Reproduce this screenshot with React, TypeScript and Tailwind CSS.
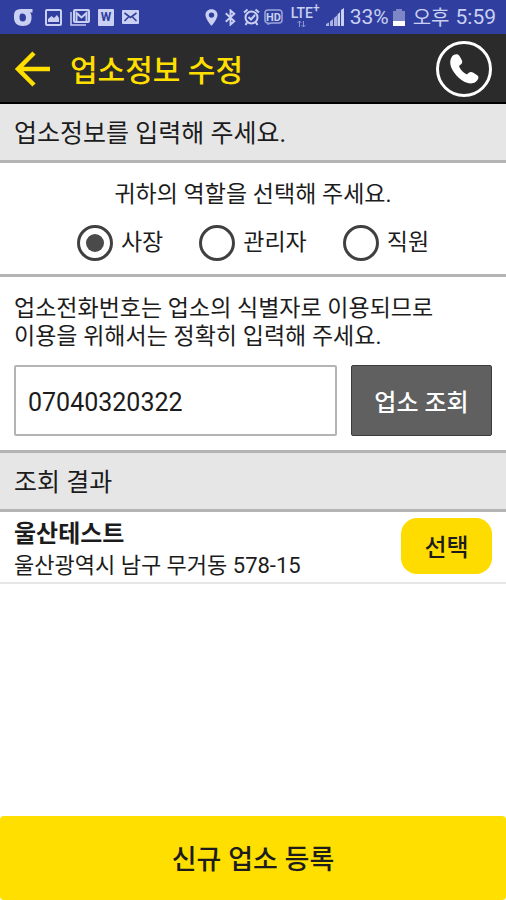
import { useState } from 'react';

const roles = [
  { id: 'owner', label: '사장' },
  { id: 'manager', label: '관리자' },
  { id: 'staff', label: '직원' },
];

const results = [{ name: '울산테스트', address: '울산광역시 남구 무거동 578-15' }];

function StatusBar() {
  return (
    <div className="flex h-[34px] items-center justify-between bg-[#303f9f] pr-2.5 pl-3.5 text-[#c9d0f2]">
      <div className="flex items-center gap-2">
        <svg width="19" height="17" viewBox="0 0 19 17" fill="currentColor" className="mr-1">
          <path
            fillRule="evenodd"
            d="M7 0H18.500V3.500H16C17.500 5 17.500 7 17.500 9C17.500 14 14.500 17 9 17S0 14 0 9V6Q0 0 7 0ZM8 4.500C6 4.500 5.500 6 5.500 8.500S6.500 12.500 8.800 12.500S12 11 12 8.500S10.500 4.500 8 4.500Z"
          />
        </svg>
        <svg width="17" height="17" viewBox="0 0 17 17">
          <rect x="1" y="1" width="15" height="15" rx="1" fill="none" stroke="currentColor" strokeWidth="2" />
          <path d="M3 13V10L6.500 7L9 9L12 6L14 9V13Z" fill="currentColor" />
        </svg>
        <svg width="20" height="17" viewBox="0 0 20 17" fill="none" stroke="currentColor">
          <path d="M1 3V16H16" strokeWidth="1.500" />
          <rect x="4" y="1" width="15" height="12" rx="1" strokeWidth="2" />
          <path d="M6.500 12V4L11.500 8.500L16.500 4V12" strokeWidth="2" />
        </svg>
        <span className="flex h-[17px] w-4 items-center justify-center rounded-[1px] bg-[#c9d0f2] text-[12px] leading-none font-bold text-[#303f9f]">
          W
        </span>
        <svg width="17" height="14" viewBox="0 0 17 14">
          <rect width="17" height="14" rx="1" fill="currentColor" />
          <path d="M2.500 3L8.500 7.500L14.500 3M2.500 11L6.500 7M14.500 11L10.500 7" fill="none" stroke="#303f9f" strokeWidth="1.600" />
        </svg>
      </div>

      <div className="flex items-center gap-1">
        <svg width="13" height="17" viewBox="0 0 14 18" className="mr-0.5">
          <path
            fillRule="evenodd"
            fill="currentColor"
            d="M7 0C3 0 .500 2.800 .500 6.300C.500 10.500 7 18 7 18S13.500 10.500 13.500 6.300C13.500 2.800 11 0 7 0ZM7 3.500A2.900 2.900 0 1 1 7 9.300A2.900 2.900 0 0 1 7 3.500Z"
          />
        </svg>
        <svg width="13" height="17" viewBox="0 0 13 18" fill="none" stroke="currentColor" strokeWidth="2" className="mr-0.5">
          <path d="M1.500 4.500L10.500 13L6.500 16.500V1.500L10.500 5L1.500 13.500" />
        </svg>
        <svg width="17" height="18" viewBox="0 0 17 18" fill="none" stroke="currentColor" strokeWidth="2">
          <circle cx="8.500" cy="9.500" r="6" />
          <path d="M5.500 9L8 11.500L12 7M1 4.500L4.500 1.500M16 4.500L12.500 1.500M4 14.500L2.500 17M13 14.500L14.500 17" />
        </svg>
        <svg width="19" height="16" viewBox="0 0 19 16" fill="none" stroke="currentColor" strokeWidth="1.500">
          <path d="M4 1H15Q18 1 18 4V11Q18 14 15 14H7L4 15V14Q1 14 1 11V4Q1 1 4 1Z" opacity=".7" />
          <text x="9.500" y="11.500" textAnchor="middle" fontSize="11" fontWeight="700" fill="currentColor" stroke="none">
            HD
          </text>
        </svg>
        <div className="ml-1 flex flex-col items-center">
          <span className="text-[14px] leading-3 font-medium">
            LTE<sup className="text-[12px] leading-none">+</sup>
          </span>
          <svg width="9" height="7" viewBox="0 0 9 7" fill="none" stroke="currentColor" opacity=".6" className="mr-2">
            <path d="M2.500 1V7M.500 3L2.500 1L4.500 3M6.500 1V7M4.500 5L6.500 7L8.500 5" />
          </svg>
        </div>
        <svg width="18" height="18" viewBox="0 0 18 18" fill="currentColor" className="ml-0.5">
          <path d="M0 16L3 14.500V18H0ZM4 13.500L7 11V18H4ZM8 10L11 7.500V18H8Z" opacity=".8" />
          <path d="M11.500 6.500L14 4V18H11.500ZM15 2L18 0V18H15Z" />
        </svg>
        <span className="ml-0.5 text-[21px] leading-6">33%</span>
        <svg width="12" height="17" viewBox="0 0 12 17" fill="currentColor">
          <path d="M3 0H9V2H12V12H0V2H3Z" opacity=".5" />
          <rect y="12" width="12" height="5" fill="#fff" />
        </svg>
        <span className="ml-1 pt-0.5 text-[20px] leading-6">오후</span>
        <span className="ml-0.5 text-[21px] leading-6">5:59</span>
      </div>
    </div>
  );
}

function SectionTitle({ children }: { children: string }) {
  return (
    <h2 className="border-b-[3px] border-[#b4b4b4] bg-[#e6e6e6] px-3.5 pt-3.5 pb-2.5 text-[25px] leading-8">
      {children}
    </h2>
  );
}

export default function App() {
  const [role, setRole] = useState('owner');
  const [phone, setPhone] = useState('07040320322');

  return (
    <div className="flex min-h-dvh flex-col bg-white font-['Roboto','Noto_Sans_CJK_KR',sans-serif] text-[#1c1c1c]">
      <StatusBar />

      {/* Header */}
      <header className="flex h-[70px] items-center border-b-2 border-black bg-[#2b2b2b] px-3.5 pt-0.5">
        <button type="button" aria-label="뒤로" className="text-[#ffdf00]">
          <svg width="36" height="36" viewBox="0 0 36 36" fill="none" stroke="currentColor" strokeWidth="4.500">
            <path d="M20 2L4 18L20 34M3 18H36" />
          </svg>
        </button>
        <h1 className="ml-5 flex-1 pt-1 text-[30px] leading-9 font-medium text-[#ffdf00]">업소정보 수정</h1>
        <button type="button" aria-label="전화" className="text-white">
          <svg width="56" height="58" viewBox="0 0 56 58">
            <circle cx="28" cy="29" r="26.500" fill="none" stroke="currentColor" strokeWidth="3" />
            <path
              fill="currentColor"
              d="M16 16.500C18 14 22 13.500 23.500 16L26 20.500C27 23 25 24.500 23 26C24 29.500 27.500 33 31 34.500C32.500 32.500 34.500 31 37 32.500L41.500 35.500C43.500 37.500 42 40 39.500 42C35 45 28.500 43 23 38C16 31.500 11.500 23 16 16.500Z"
            />
          </svg>
        </button>
      </header>

      <SectionTitle>업소정보를 입력해 주세요.</SectionTitle>

      {/* Role */}
      <div
        role="radiogroup"
        aria-labelledby="role-label"
        className="border-b-[3px] border-[#b4b4b4] pt-4 pb-[13px]"
      >
        <p id="role-label" className="text-center text-[23px] leading-8">
          귀하의 역할을 선택해 주세요.
        </p>
        <div className="mt-3.5 flex justify-center gap-9">
          {roles.map((item) => (
            <label key={item.id} className="flex items-center gap-2 text-[23px] leading-9">
              <input
                type="radio"
                name="role"
                value={item.id}
                checked={role === item.id}
                onChange={() => setRole(item.id)}
                className="size-9 appearance-none rounded-full border-3 border-[#404040] bg-clip-content p-1.5 checked:bg-[#4a4a4a]"
              />
              {item.label}
            </label>
          ))}
        </div>
      </div>

      {/* Phone lookup */}
      <section className="border-b-[3px] border-[#b4b4b4] px-3.5 pt-[18px] pb-3.5">
        <label htmlFor="phone" className="block text-[23px] leading-7">
          업소전화번호는 업소의 식별자로 이용되므로
          <br />
          이용을 위해서는 정확히 입력해 주세요.
        </label>
        <div className="mt-3.5 flex gap-3.5">
          <input
            id="phone"
            type="tel"
            value={phone}
            onChange={(e) => setPhone(e.target.value)}
            className="h-[71px] min-w-0 flex-1 rounded-xs border-2 border-[#b4b4b4] px-3 pt-1 text-[25px]"
          />
          <button
            type="button"
            className="h-[71px] w-[141px] rounded-xs border border-[#3c3c3c] bg-[#606060] pt-1 text-[24px] font-medium text-white"
          >
            업소 조회
          </button>
        </div>
      </section>

      <SectionTitle>조회 결과</SectionTitle>

      {/* Results */}
      <ul className="flex-1">
        {results.map((item) => (
          <li key={item.name} className="flex items-start justify-between border-b-2 border-[#e6e6e6] px-3.5 pt-1.5">
            <div>
              <p className="text-[24px] leading-8 font-bold">{item.name}</p>
              <p className="text-[22px] leading-8">{item.address}</p>
            </div>
            <button type="button" className="h-14 w-[91px] rounded-2xl bg-[#ffdc00] pt-1 text-[24px] font-medium">
              선택
            </button>
          </li>
        ))}
      </ul>

      <button type="button" className="h-[84px] rounded-sm bg-[#ffdf00] pt-1 text-[27px] font-medium">
        신규 업소 등록
      </button>
    </div>
  );
}
